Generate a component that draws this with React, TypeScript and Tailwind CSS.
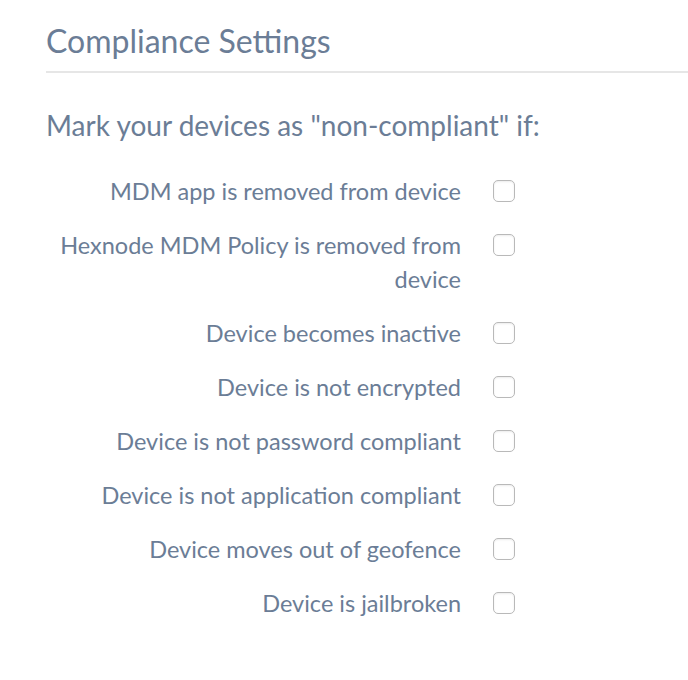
import React from "react";

const items: string[][] = [
  ["MDM app is removed from device"],
  ["Hexnode MDM Policy is removed from", "device"],
  ["Device becomes inactive"],
  ["Device is not encrypted"],
  ["Device is not password compliant"],
  ["Device is not application compliant"],
  ["Device moves out of geofence"],
  ["Device is jailbroken"],
];

export default function App() {
  return (
    <div
      className="w-[688px] h-[680px] bg-white overflow-hidden text-[#6b7d96]"
      style={{ fontFamily: "Lato, 'Open Sans', sans-serif" }}
    >
      <div className="pl-[46px]">
        <h1 className="text-[32px] leading-[38px] pt-[22px] pb-[11px] font-normal">Compliance Settings</h1>
        <div className="h-[2px] bg-[#e6e6e6]" />
        <h2 className="text-[28px] leading-[34px] mt-[35px] font-normal">
          Mark your devices as "non-compliant" if:
        </h2>
        <div className="mt-[32px] flex flex-col gap-[20px]">
          {items.map((lines, i) => (
            <div key={i} className="flex items-start">
              <div className="w-[415px] text-right text-[23.5px] leading-[34px]">
                {lines.map((l, j) => (
                  <div key={j}>{l}</div>
                ))}
              </div>
              <div className="ml-[32px] mt-[6px] w-[22px] h-[22px] rounded-[5px] border border-[#b9b9b9] bg-white shadow-[inset_0_1px_2px_rgba(0,0,0,0.08)]" />
            </div>
          ))}
        </div>
      </div>
    </div>
  );
}
